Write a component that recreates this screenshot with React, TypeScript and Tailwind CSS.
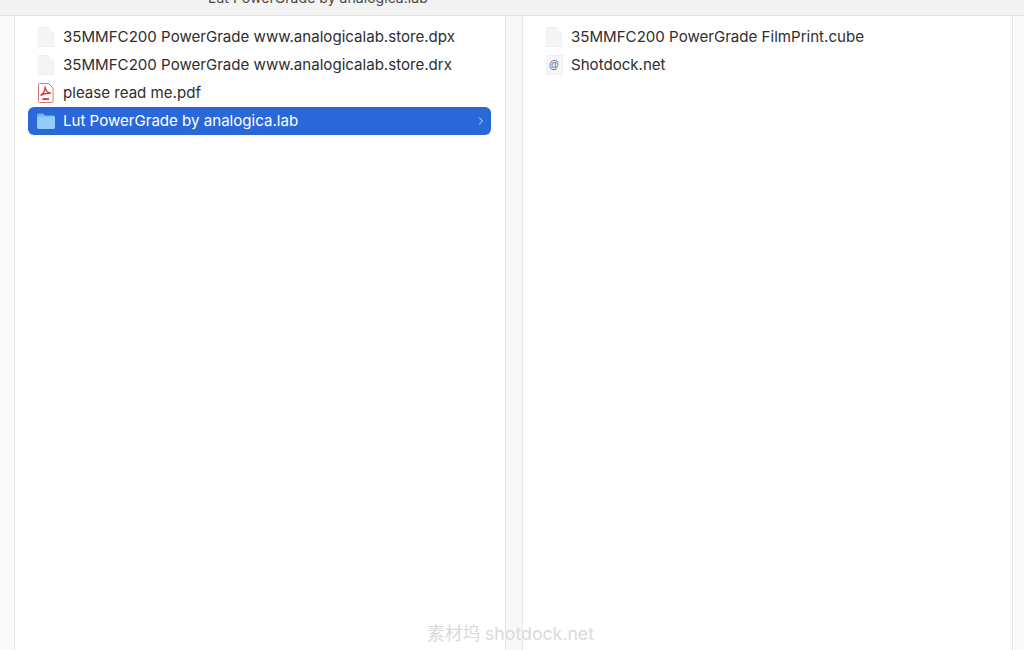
import { ChevronRight } from "lucide-react";

const leftFiles = [
  { name: "35MMFC200 PowerGrade www.analogicalab.store.dpx", icon: "doc" },
  { name: "35MMFC200 PowerGrade www.analogicalab.store.drx", icon: "doc" },
  { name: "please read me.pdf", icon: "pdf" },
];

const rightFiles = [
  { name: "35MMFC200 PowerGrade FilmPrint.cube", icon: "doc" },
  { name: "Shotdock.net", icon: "link" },
];

function DocIcon() {
  return (
    <svg width="18" height="20" viewBox="0 0 18 20" className="shrink-0">
      <path d="M1.5 0.5H11.5L16.5 5.5V19.5H1.5Z" fill="#f5f5f5" stroke="#eeeeee" />
      <path d="M11.5 0.5V5.5H16.5Z" fill="#fcfcfc" stroke="#ececec" strokeWidth="0.5" />
    </svg>
  );
}

function PdfIcon() {
  return (
    <svg width="18" height="20" viewBox="0 0 18 20" className="shrink-0">
      <path d="M1.5 1.5C1.5 0.9 1.9 0.5 2.5 0.5H11.5L16 5V18.5C16 19.1 15.6 19.5 15 19.5H2.5C1.9 19.5 1.5 19.1 1.5 18.5Z" fill="#fff" stroke="#e0716d" />
      <path d="M3.5 12.5C6.5 10.5 8.5 7 8.2 3.5C8.2 7 10.5 10 14 10.2C10.5 10 7 10.8 3.5 12.5Z" fill="none" stroke="#d8322d" strokeWidth="1.3" />
      <rect x="5.5" y="15" width="6.5" height="2.2" fill="#a8605e" />
    </svg>
  );
}

function LinkIcon() {
  return (
    <div className="flex h-[20px] w-[17px] shrink-0 items-center justify-center border border-[#f0f0f0] bg-[#f6f6f8] font-['Liberation_Sans',sans-serif] text-[10px] font-bold leading-none text-[#6a6a9c]">
      @
    </div>
  );
}

function FolderIcon() {
  return (
    <svg width="18" height="16" viewBox="0 0 18 16" className="shrink-0">
      <path d="M0 2.5C0 1.4 0.8 0.5 2 0.5H6L8 2.5H16C17.2 2.5 18 3.4 18 4.5V14C18 15.1 17.2 16 16 16H2C0.8 16 0 15.1 0 14Z" fill="#6fb3ee" />
      <path d="M0 5C0 4.2 0.6 3.6 1.4 3.6H16.6C17.4 3.6 18 4.2 18 5V14C18 15.1 17.2 16 16 16H2C0.8 16 0 15.1 0 14Z" fill="#93cdf7" />
    </svg>
  );
}

function FileRow({ name, icon }: { name: string; icon: string }) {
  return (
    <div className="flex h-[28px] items-center gap-[8px] pl-[9px] text-[#2e2e2e]">
      <div className="flex w-[18px] justify-center">
        {icon === "doc" && <DocIcon />}
        {icon === "pdf" && <PdfIcon />}
        {icon === "link" && <LinkIcon />}
      </div>
      <span className="whitespace-nowrap pt-px">{name}</span>
    </div>
  );
}

export default function App() {
  return (
    <div className="relative flex h-[650px] w-[1024px] flex-col overflow-hidden bg-white font-['Inter','Liberation_Sans',sans-serif] text-[15.08px]">
      {/* title bar, cut off by the crop */}
      <div className="flex h-[16px] shrink-0 justify-start overflow-hidden border-b border-[#e4e4e4] bg-[#f3f3f3] pl-[208px]">
        <span className="mt-[-11px] whitespace-nowrap text-[14.1px] leading-[18px] text-[#4a4a4a]">
          Lut PowerGrade by analogica.lab
        </span>
      </div>

      <div className="flex flex-1">
        <div className="box-content w-[14px] shrink-0 border-r border-[#e8e8e8] bg-[#fafafa]" />

        <div className="w-[490px] shrink-0 pl-[13px] pt-[7px]">
          <div className="w-[463px]">
            {leftFiles.map((f) => (
              <FileRow key={f.name} name={f.name} icon={f.icon} />
            ))}
            <div className="flex h-[28px] items-center gap-[8px] rounded-[6px] bg-[#2a67d8] pl-[9px] pr-[4px] text-white">
              <FolderIcon />
              <span className="flex-1 whitespace-nowrap pt-px">Lut PowerGrade by analogica.lab</span>
              <ChevronRight size={12} strokeWidth={2} className="text-[#dbe7fb]" />
            </div>
          </div>
        </div>

        <div className="w-[18px] shrink-0 border-x border-[#e8e8e8] bg-[#f8f8f8]" />

        <div className="w-[489px] shrink-0 pl-[13px] pt-[7px]">
          {rightFiles.map((f) => (
            <FileRow key={f.name} name={f.name} icon={f.icon} />
          ))}
        </div>

        <div className="flex-1 border-l border-[#e8e8e8] bg-[#fafafa]" />
      </div>

      {/* watermark */}
      <div className="absolute left-[427px] top-[623px] whitespace-nowrap font-['Inter','Noto_Sans_CJK_SC',sans-serif] text-[17.7px] leading-[22px] text-[#dadada]">
        素材坞 shotdock.net
      </div>
    </div>
  );
}
